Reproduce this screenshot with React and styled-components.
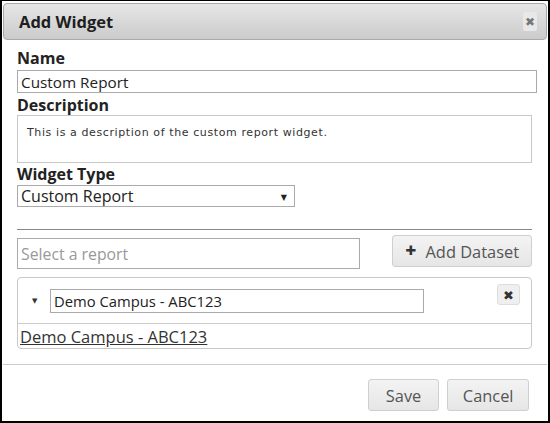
import React from "react";
import styled, { createGlobalStyle } from "styled-components";

const Global = createGlobalStyle`
  html, body { margin: 0; padding: 0; background: #fff; }
  * { box-sizing: border-box; }
`;

const Frame = styled.div`
  width: 550px;
  height: 423px;
  border: 2px solid #000;
  border-top-width: 1px;
  background: #fff;
  display: flex;
  flex-direction: column;
  font-family: "Open Sans", "DejaVu Sans", sans-serif;
  color: #222;
`;

const Header = styled.div`
  margin: 2px 1px 0;
  height: 37px;
  border: 1px solid #a9a9a9;
  border-radius: 4px;
  background: linear-gradient(#e6e6e6, #cbcbcb);
  display: flex;
  align-items: center;
  justify-content: space-between;
  padding: 0 9px 0 15px;
`;

const Title = styled.div`
  font-weight: 700;
  font-size: 16.5px;
  color: #1e1e1e;
`;

const CloseBtn = styled.div`
  width: 14px;
  height: 19px;
  background: #e8e8e8;
  border-radius: 2px;
  display: flex;
  align-items: center;
  justify-content: center;
  color: #777;
  font-weight: 700;
  font-size: 12px;
  line-height: 1;
`;

const Body = styled.div`
  padding: 0 16px 0 15px;
  display: flex;
  flex-direction: column;
`;

const Label = styled.div`
  font-weight: 700;
  font-size: 16px;
  line-height: 18px;
  color: #222;
  margin-top: ${(p) => p.$mt || 0}px;
  margin-bottom: ${(p) => p.$mb || 0}px;
`;

const TextInput = styled.div`
  height: ${(p) => p.$h || 23}px;
  width: ${(p) => p.$w || "100%"};
  border: 1px solid ${(p) => p.$border || "#aaa"};
  background: #fff;
  display: flex;
  align-items: center;
  padding-left: 3px;
  margin-top: ${(p) => p.$mt || 0}px;
  font-size: ${(p) => p.$fs || 14}px;
  color: ${(p) => p.$color || "#222"};
`;

const TextArea = styled.div`
  height: 48px;
  border: 1px solid #c8c8c8;
  padding: 10px 9px;
  font-family: "DejaVu Sans", sans-serif;
  font-size: 11px;
  letter-spacing: 0.6px;
  color: #333;
`;

const Select = styled.div`
  width: 278px;
  height: 22px;
  border: 1px solid #aaa;
  display: flex;
  align-items: center;
  justify-content: space-between;
  padding: 0 7px 0 3px;
  font-size: 16px;
  color: #222;
`;

const Arrow = styled.span`
  font-size: 8px;
  color: #222;
`;

const Divider = styled.div`
  height: 1px;
  background: #888;
  margin-top: 22px;
`;

const SearchRow = styled.div`
  display: flex;
  justify-content: space-between;
  align-items: flex-start;
  margin-top: 5px;
`;

const Button = styled.div`
  height: 32px;
  padding: 0 ${(p) => p.$px || 14}px;
  border: 1px solid #cfcfcf;
  border-radius: 3px;
  background: linear-gradient(#f3f3f3, #e6e6e6);
  display: flex;
  align-items: center;
  gap: 9px;
  font-size: 16.4px;
  color: #555;
`;

const Plus = styled.span`
  font-weight: 800;
  font-size: 19px;
  color: #333;
  line-height: 1;
  margin-top: -2px;
`;

const Panel = styled.div`
  margin-top: 8px;
  border: 1px solid #c8c8c8;
  border-radius: 4px;
  display: flex;
  flex-direction: column;
`;

const PanelTop = styled.div`
  height: 46px;
  display: flex;
  align-items: center;
  padding: 0 11px 0 14px;
  border-bottom: 1px solid #ccc;
  position: relative;
`;

const Caret = styled.span`
  font-size: 7px;
  color: #333;
  width: 18px;
`;

const SmallX = styled.div`
  position: absolute;
  right: 11px;
  top: 6px;
  width: 23px;
  height: 21px;
  border: 1px solid #ddd;
  border-radius: 3px;
  background: #efefef;
  display: flex;
  align-items: center;
  justify-content: center;
  font-size: 13px;
  font-weight: 800;
  color: #333;
`;

const PanelLink = styled.a`
  display: block;
  height: 24px;
  padding: 3px 2px 0;
  line-height: 20px;
  font-size: 16.5px;
  color: #333;
  text-decoration: underline;
`;

const Footer = styled.div`
  margin: 15px 1px 0;
  border-top: 1px solid #ccc;
  display: flex;
  justify-content: flex-end;
  gap: 8px;
  padding: 14px 18px 0 0;
`;

export default function App() {
  return (
    <>
      <Global />
      <Frame>
        <Header>
          <Title>Add Widget</Title>
          <CloseBtn>✖</CloseBtn>
        </Header>
        <Body>
          <Label $mt={9} $mb={3}>Name</Label>
          <TextInput $w="calc(100% + 5px)" $fs={15.3}>Custom Report</TextInput>
          <Label $mt={3} $mb={1}>Description</Label>
          <TextArea>This is a description of the custom report widget.</TextArea>
          <Label $mt={2} $mb={2}>Widget Type</Label>
          <Select>
            <span>Custom Report</span>
            <Arrow>▼</Arrow>
          </Select>
          <Divider />
          <SearchRow>
            <TextInput $w="343px" $h={31} $color="#999" $fs={15.8} $mt={3}>
              Select a report
            </TextInput>
            <Button $px={12}>
              <Plus>+</Plus>
              Add Dataset
            </Button>
          </SearchRow>
          <Panel>
            <PanelTop>
              <Caret>▼</Caret>
              <TextInput $w="374px" $h={24} $fs={14.8}>Demo Campus - ABC123</TextInput>
              <SmallX>✖</SmallX>
            </PanelTop>
            <PanelLink>Demo Campus - ABC123</PanelLink>
          </Panel>
        </Body>
        <Footer>
          <Button $px={17}>Save</Button>
          <Button $px={14.5}>Cancel</Button>
        </Footer>
      </Frame>
    </>
  );
}
